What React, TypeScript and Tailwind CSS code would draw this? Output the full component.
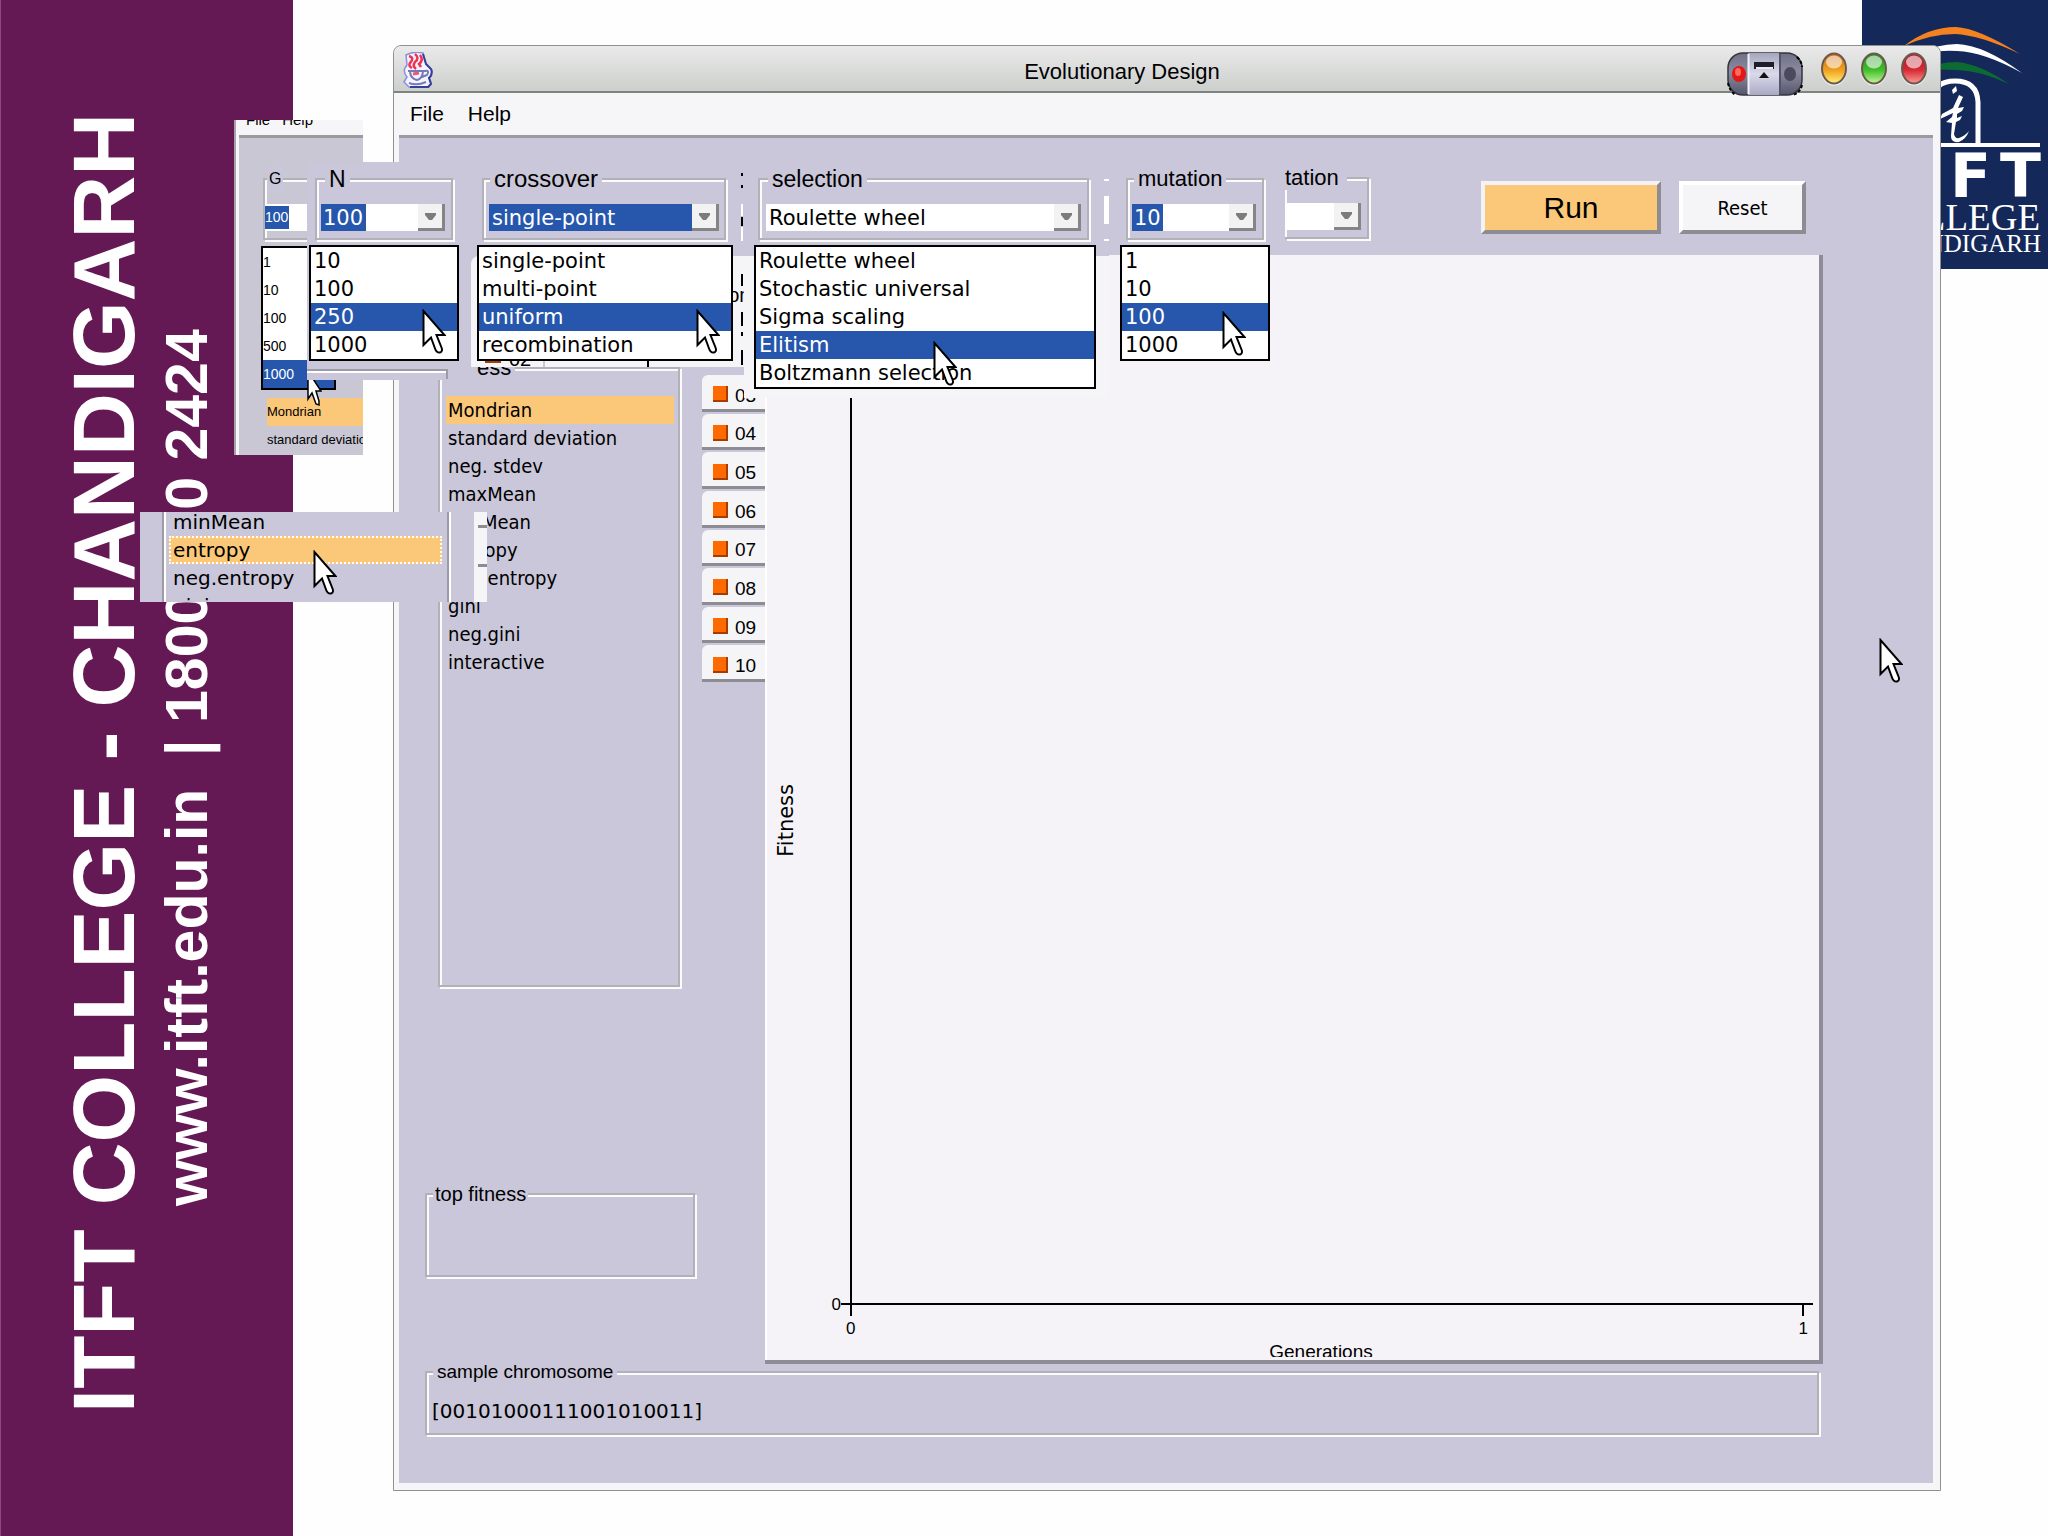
import type { ReactNode } from 'react'

const wide = "font-['DejaVu_Sans',sans-serif]"
const condensed = "font-['DejaVu_Sans_Condensed','DejaVu_Sans',sans-serif]"
const etched = 'border-2 border-[#b2b1b8] shadow-[2px_2px_0_#fbfafd,inset_2px_2px_0_#fbfafd]'

const fitnessFunctions = [
  'Mondrian',
  'standard deviation',
  'neg. stdev',
  'maxMean',
  'minMean',
  'entropy',
  'neg.entropy',
  'gini',
  'neg.gini',
  'interactive',
]
const samples = ['03', '04', '05', '06', '07', '08', '09', '10']

const Cursor = ({ className }: { className: string }) => (
  <svg className={`pointer-events-none absolute h-[46px] w-[24px] ${className}`} viewBox="0 0 24 46" aria-hidden="true">
    <path
      d="M1.5 2V36L9 28.5L13 39.5Q14.500 44 18 43.500Q21 42.500 19.500 38.500L14.500 26H22.500Z"
      fill="#fff"
      stroke="#000"
      strokeWidth="2"
    />
  </svg>
)

type GroupProps = { label: string; className?: string; legendClass?: string; children?: ReactNode }

const Group = ({ label, className = '', legendClass = 'ml-2 px-1 text-[23px]', children }: GroupProps) => (
  <fieldset className={`min-w-0 ${etched} ${className}`}>
    <legend className={`bg-[#c9c7d9] leading-6 ${legendClass}`}>{label}</legend>
    {children}
  </fieldset>
)

type ComboProps = { label: string; value: string; selectClass: string; className?: string }

const Combo = ({ label, value, selectClass, className = '' }: ComboProps) => (
  <div className={`mt-[13px] mb-[7px] flex h-[27px] bg-white ${className}`}>
    <select
      aria-label={label}
      defaultValue={value}
      className={`h-full appearance-none rounded-none text-[21px] leading-[26px] ${wide} ${selectClass}`}
    >
      <option>{value}</option>
    </select>
    <span className="ml-auto flex w-[27px] shrink-0 items-center justify-center border-r-[3px] border-b-[3px] border-[#858585] bg-[#f3f2f3]">
      <svg className="h-[7px] w-[11px]" viewBox="0 0 11 7" aria-hidden="true">
        <path d="M0 0H11V2L7 7H4L0 2Z" fill="#7c7c7c" />
      </svg>
    </span>
  </div>
)

type PopupProps = { items: string[]; active: string; className: string }

const Popup = ({ items, active, className }: PopupProps) => (
  <ul role="listbox" className={`absolute border-2 border-black bg-white text-[21px] leading-7 whitespace-nowrap ${wide} ${className}`}>
    {items.map((item) => (
      <li
        key={item}
        role="option"
        aria-selected={item === active}
        className={item === active ? 'bg-[#2657ac] pl-[3px] text-white' : 'pl-[3px]'}
      >
        {item}
      </li>
    ))}
  </ul>
)

const CollegeLogo = () => (
  <svg className="absolute top-0 right-0 h-[269px] w-[186px] bg-[#15285a]" viewBox="0 0 186 269" aria-label="ITFT College Chandigarh">
    <path d="M42 46Q66 27 94 27Q116 28 158 54Q118 35 93 34Q68 34 42 46Z" fill="#f58220" />
    <path d="M56 54Q75 44 95 44Q122 45 160 73Q122 52 95 51Q75 50 56 54Z" fill="#fff" />
    <path d="M60 70Q77 62 95 62Q118 64 147 84Q120 71 95 70Q77 69 60 70Z" fill="#0b6b33" />
    <path d="M70 145V102Q71 81 93 81Q115 81 116 102V145" fill="none" stroke="#fff" strokeWidth="5" />
    <path d="M8 145H178" stroke="#fff" strokeWidth="4" />
    <path d="M90 90L94 86L95 91L91 94Z" fill="#fff" />
    {/* script letter under the arch */}
    <path d="M97 95L101 97L96 108L102 107L100 111L95 114L95 118L100 116L98 120L94 122L92 134Q93 139 97 138Q103 136 107 131Q104 139 97 142Q89 143 89 136L90 123L84 122L90 117L91 113L78 119L80 114L91 108Z" fill="#fff" />
    <g fill="#fff">
      <g className="font-['DejaVu_Sans',sans-serif] text-[60px] font-bold">
        <text x="76" y="197" textAnchor="end">IT</text>
        <text x="88" y="197">F</text>
        <text x="179" y="197" textAnchor="end">T</text>
      </g>
      <text x="178" y="230" textAnchor="end" className="font-['Liberation_Serif',serif] text-[37px]">COLLEGE</text>
      <text x="179" y="252" textAnchor="end" className="font-['Liberation_Serif',serif] text-[25px]">CHANDIGARH</text>
    </g>
  </svg>
)

const JavaIcon = () => (
  <svg className="h-[36px] w-[30px] shrink-0" viewBox="0 0 30 36" aria-hidden="true">
    <path d="M3 3Q10-1 20 1L23 12L29 18Q30 24 26 26Q30 31 26 35H6L1 30L4 25Q0 20 2 16L4 13Z" fill="#f4f4ff" stroke="#8a8fe0" strokeWidth="1.500" />
    <path d="M20 2L23 12L28 17Q30 22 26 26L28 32L25 35H7" fill="none" stroke="#343f9c" strokeWidth="2" />
    <path d="M6 4Q12 6 7 11Q5 14 9 16M12 2Q17 6 12 10Q9 14 13 17M17 3Q21 8 16 12L18 15" fill="none" stroke="#ee3355" strokeWidth="2.500" />
    <path d="M5 19H22Q27 18 24 23L19 25M7 20Q8 27 14 28Q19 27 20 20M6 31Q14 34 23 30" fill="none" stroke="#7479b8" strokeWidth="2" />
    <path d="M10 22L16 21" stroke="#ee5577" strokeWidth="3" />
  </svg>
)

const PillIcon = () => (
  <svg className="h-[44px] w-[76px]" viewBox="0 0 76 44" aria-hidden="true">
    <defs>
      <linearGradient id="pill" x1="0" y1="0" x2="0" y2="1">
        <stop offset="0" stopColor="#6f6f86" />
        <stop offset=".45" stopColor="#8b8ba0" />
        <stop offset="1" stopColor="#55556c" />
      </linearGradient>
      <linearGradient id="pillMid" x1="0" y1="0" x2="0" y2="1">
        <stop offset="0" stopColor="#a5a5bd" />
        <stop offset=".5" stopColor="#dadaea" />
        <stop offset="1" stopColor="#a9a9c4" />
      </linearGradient>
    </defs>
    <rect x="1" y="1" width="74" height="42" rx="15" fill="url(#pill)" stroke="#34343f" strokeWidth="1.500" />
    <path d="M70 5Q75 10 75 15M75 33Q73 41 66 43M1 31Q3 40 9 43" fill="none" stroke="#000" strokeWidth="2" strokeDasharray="3 2" />
    <rect x="21" y="1" width="31" height="42" fill="url(#pillMid)" />
    <path d="M21.500 2V42" stroke="#f2f2fa" strokeWidth="2" />
    <path d="M53 2V42" stroke="#55556a" strokeWidth="2" />
    <rect x="27" y="10" width="20" height="7" fill="#1d1d2c" />
    <path d="M29 16H46" stroke="#e9e9f6" strokeWidth="2" />
    <path d="M37 20L42 26H32Z" fill="#111" />
    <ellipse cx="12" cy="22" rx="7" ry="8" fill="#e01818" />
    <ellipse cx="11" cy="20" rx="3" ry="4" fill="#ff6a5e" />
    <ellipse cx="63" cy="22" rx="6" ry="7" fill="#4a4a5c" />
  </svg>
)

type OrbProps = { id: string; dark: string; mid: string; light: string }

const Orb = ({ id, dark, mid, light }: OrbProps) => (
  <svg className="h-[34px] w-[28px]" viewBox="0 0 28 34" aria-hidden="true">
    <defs>
      <linearGradient id={id} x1="0" y1="0" x2="0" y2="1">
        <stop offset="0" stopColor={dark} />
        <stop offset=".55" stopColor={mid} />
        <stop offset="1" stopColor={light} />
      </linearGradient>
    </defs>
    <ellipse cx="14" cy="18" rx="13" ry="15.500" fill="#fff" opacity=".8" />
    <ellipse cx="14" cy="16.500" rx="12" ry="15" fill={`url(#${id})`} stroke="#6a5a4c" strokeWidth="2" />
    <ellipse cx="14" cy="10" rx="8" ry="6.500" fill="#fff" opacity=".6" />
  </svg>
)

const TitleBar = () => (
  <header className="flex h-[47px] items-start rounded-t-lg border-b-2 border-[#7f837f] bg-linear-to-b from-[#e9eae9] to-[#cdcfcd] pt-[6px] pr-[12px] pl-[9px]">
    <JavaIcon />
    <h1 className="flex-1 pl-[84px] text-center text-[22px] leading-10">Evolutionary Design</h1>
    <div className="flex items-start">
      <button type="button" aria-label="Stay on top" className="mr-[17px]"><PillIcon /></button>
      <div className="flex gap-3">
        <button type="button" aria-label="Minimize"><Orb id="orbMin" dark="#c9661a" mid="#f0a01c" light="#fff27a" /></button>
        <button type="button" aria-label="Maximize"><Orb id="orbMax" dark="#1f8a1f" mid="#3fbf2b" light="#c4f79a" /></button>
        <button type="button" aria-label="Close"><Orb id="orbClose" dark="#a81828" mid="#d62a35" light="#ff9c94" /></button>
      </div>
    </div>
  </header>
)

const Chart = () => (
  <section className="flex min-w-0 flex-1 flex-col border-r-4 border-b-4 border-[#8e8d97] bg-[#f5f3f7] shadow-[inset_2px_0_0_#fff]">
    <div className="flex flex-1">
      <div className="flex w-[42px] items-center justify-center pt-[70px]">
        <span className={`rotate-180 text-[21px] leading-6 [writing-mode:vertical-rl] ${wide}`}>Fitness</span>
      </div>
      <span className="mb-px w-[34px] self-end text-right text-[17px] leading-5">0</span>
      <div className="relative mr-[6px] flex-1">
        <svg className="absolute inset-0 size-full overflow-visible" aria-hidden="true">
          <line x1="10" x2="10" y1="0" y2="100%" stroke="#000" strokeWidth="2" />
          <svg y="100%" className="overflow-visible">
            <line x1="0" x2="100%" y1="-12" y2="-12" stroke="#000" strokeWidth="2" />
          </svg>
          <svg x="100%" y="100%" className="overflow-visible">
            <line x1="-10" x2="-10" y1="-12" y2="0" stroke="#000" strokeWidth="2" />
          </svg>
        </svg>
      </div>
    </div>
    <div className="mt-[3px] flex justify-between pr-[11px] pl-[81px] text-[17px] leading-5">
      <span>0</span>
      <span>1</span>
    </div>
    <div className="mb-[3px] h-[18px] overflow-hidden pt-[3px] pl-[58px] text-center text-[19px] leading-5">Generations</div>
  </section>
)

const MainWindow = () => (
  <main className="relative flex flex-1 flex-col rounded-t-lg border border-[#8f918f] bg-[#f6f6f8]">
    <TitleBar />
    <nav className="flex h-[42px] items-center gap-6 pl-4 text-[21px] leading-[38px]">
      <button type="button">File</button>
      <button type="button">Help</button>
    </nav>
    <div className="mr-[7px] mb-[7px] ml-[5px] flex flex-1 flex-col border-t-[3px] border-[#9b9b9f] bg-[#c9c7d9] pr-[110px] pb-[48px] pl-[26px]">
      <div className="flex h-[117px] items-start justify-end pr-[17px]">
        <Group label="tation" className="mt-[28px] mr-[112px] w-[84px] border-l-0" legendClass="pr-2 text-[22px]">
          <Combo label="mutation rate" value=" " selectClass="w-[40px]" className="mr-[6px]" />
        </Group>
        <button
          type="button"
          className="mt-[43px] mr-[18px] h-[53px] w-[180px] border-4 border-t-[#f4f2f4] border-r-[#8d8c92] border-b-[#8d8c92] border-l-[#f4f2f4] bg-[#fbc778] text-[30px]"
        >
          Run
        </button>
        <button
          type="button"
          className={`mt-[43px] h-[53px] w-[127px] border-4 border-t-white border-r-[#8d8c92] border-b-[#8d8c92] border-l-white bg-[#f5f4f7] text-xl ${condensed}`}
        >
          Reset
        </button>
      </div>
      <div className="flex min-h-[1109px]">
        <div className="flex w-[277px] shrink-0 flex-col">
          <Group label="ess" className="mt-[101px] ml-[13px] min-h-[631px] w-[242px]" legendClass="ml-1 pr-1 pl-[33px] text-[22px]">
            <ul className={`mt-4 mr-1 ml-[6px] text-xl leading-7 ${condensed}`}>
              {fitnessFunctions.map((name) => (
                <li key={name} className={name === 'Mondrian' ? 'bg-[#fbc778] pl-[2px]' : 'pl-[2px]'}>
                  {name}
                </li>
              ))}
            </ul>
          </Group>
          <Group label="top fitness" className="mt-auto mb-[87px] h-[95px] w-[270px]" legendClass="ml-[6px] px-[2px] text-xl" />
        </div>
        <div className="flex h-[427px] w-[63px] shrink-0 flex-col pt-[118px]">
          {samples.map((n) => (
            <button
              key={n}
              type="button"
              className="mt-[2px] flex flex-1 items-center gap-[7px] rounded-tl-md border-b-[3px] border-[#8d8c92] bg-[#f5f4f7] pt-2 pl-[11px] text-[19px] leading-5"
            >
              <span className="mb-[3px] h-4 w-[15px] border-r-2 border-b-2 border-[#a63c00] bg-[#ff6a00]" />
              {n}
            </button>
          ))}
        </div>
        <Chart />
      </div>
      <Group label="sample chromosome" className="-mt-1 mr-1" legendClass="ml-[6px] px-1 text-[19px]">
        <p className={`mt-[13px] mb-2 pl-[5px] text-xl leading-7 ${wide}`}>[00101000111001010011]</p>
      </Group>
    </div>
    <Cursor className="top-[592px] right-[37px]" />
  </main>
)

const GenerationsClip = () => (
  <section className="absolute top-[120px] left-[234px] h-[335px] w-[129px] overflow-hidden bg-[#f6f6f8] pl-[5px] shadow-[inset_2px_0_0_#a5a5a9]">
    <div className="flex h-[15px] items-start gap-3 overflow-hidden pl-[7px] text-[15px] leading-5">
      <span className="-mt-[10px]">File</span>
      <span className="-mt-[10px]">Help</span>
    </div>
    <div className="h-full border-t-[3px] border-[#9b9b9f] bg-[#c9c7d4] pl-[24px]">
      <Group label="G" className="mt-[29px] w-[90px]" legendClass="ml-[2px] px-[2px] text-base">
        <div className="mt-[13px] mb-[7px] flex h-[27px] bg-white">
          <input aria-label="G" defaultValue="100" className="my-[2px] w-[24px] bg-[#2657ac] text-[14px] text-white" />
        </div>
      </Group>
      <ul className="mt-[158px] pl-[4px] text-[13px] leading-7 whitespace-nowrap">
        <li className="bg-[#fbc778]">Mondrian</li>
        <li>standard deviation</li>
      </ul>
    </div>
    <ul role="listbox" className="absolute top-[126px] left-[27px] w-[75px] border-2 border-black bg-white text-[14px] leading-7">
      {['1', '10', '100', '500', '1000'].map((item) => (
        <li key={item} role="option" aria-selected={item === '1000'} className={item === '1000' ? 'bg-[#2657ac] text-white' : ''}>
          {item}
        </li>
      ))}
    </ul>
    <svg className="absolute top-[250px] left-[73px] h-[38px] w-[15px]" viewBox="0 0 15 38" aria-hidden="true">
      <path d="M1 1V29L5 23L9 34L12 35V31L9 21H14Z" fill="#fff" stroke="#000" strokeWidth="1.500" />
    </svg>
  </section>
)

const PopulationClip = () => (
  <section className="absolute top-[162px] left-[307px] h-[218px] w-[163px] bg-[#c9c7d9] pt-[5px] pl-[8px]">
    <Group label="N" className="w-[138px]">
      <Combo label="N" value="100" selectClass="w-[45px] bg-[#2657ac] pl-[2px] text-white" className="mr-[6px] ml-[4px]" />
    </Group>
    <div className="mt-[129px] -ml-[8px] h-[10px] w-[141px] border-t-2 border-r-2 border-[#9d9ca6] shadow-[inset_0_2px_0_#fff]" />
    <Popup items={['10', '100', '250', '1000']} active="250" className="top-[83px] left-[2px] w-[150px]" />
    <Cursor className="top-[147px] left-[115px]" />
  </section>
)

const CrossoverClip = () => (
  <section className="absolute top-[162px] left-[471px] h-[205px] w-[273px]">
    <div className="h-[94px] bg-[#c9c7d9] pt-[5px] pl-[11px]">
      <Group label="crossover" className="w-[244px]" legendClass="ml-[6px] px-1 text-2xl">
        <Combo label="crossover" value="single-point" selectClass="flex-1 bg-[#2657ac] pl-[3px] text-white" className="mr-[5px] ml-[5px]" />
      </Group>
    </div>
    <div className="flex h-[111px] items-end rounded-tl-lg bg-[#f5f4f7] text-[20px]">
      <div className="flex h-3 w-[74px] items-end gap-2 overflow-hidden border-r-2 border-[#c9c9cf] pl-[14px] leading-4">
        <span className="mb-[4px] h-4 w-[16px] border-b-2 border-[#a63c00] bg-[#ff6a00]" />
        <span>02</span>
      </div>
      <div className="h-3 w-[104px] border-r-2 border-black" />
      <span className="absolute top-[121px] right-[-12px] leading-6">om</span>
    </div>
    <Popup
      items={['single-point', 'multi-point', 'uniform', 'recombination']}
      active="uniform"
      className="top-[83px] left-[6px] w-[256px]"
    />
    <Cursor className="top-[147px] left-[225px]" />
  </section>
)

const SelectionClip = () => (
  <section className="absolute top-[162px] left-[744px] h-[236px] w-[365px]">
    <div className="flex h-[94px] items-start bg-[#c9c7d9] pt-[5px] pl-[14px]">
      <Group label="selection" className="w-[331px]">
        <Combo label="selection" value="Roulette wheel" selectClass="flex-1 pl-[3px]" className="mr-[6px] ml-[6px]" />
      </Group>
      <div className="mt-[12px] ml-[15px] flex h-[62px] w-[5px] items-center border-y-2 border-white">
        <span className="h-7 w-full bg-white" />
      </div>
    </div>
    <div className="h-[142px] bg-[#f5f4f7]" />
    {/* broken rule left between the two pasted groups */}
    <svg className="absolute top-0 left-[-4px] h-[236px] w-[4px]" aria-hidden="true">
      <path d="M2 11V14M2 23V26M2 55V64M2 112V124M2 150V164M2 170V174M2 188V203" stroke="#000" strokeWidth="2" />
      <path d="M2 42V54M2 65V79" stroke="#fff" strokeWidth="2" />
    </svg>
    <Popup
      items={['Roulette wheel', 'Stochastic universal', 'Sigma scaling', 'Elitism', 'Boltzmann selection']}
      active="Elitism"
      className="top-[83px] left-[10px] w-[342px]"
    />
    <Cursor className="top-[179px] left-[189px]" />
  </section>
)

const MutationClip = () => (
  <section className="absolute top-[162px] left-[1109px] h-[200px] w-[166px] pt-[5px] pl-[17px]">
    <Group label="mutation" className="w-[138px]" legendClass="ml-[6px] px-1 text-[22px]">
      <Combo label="mutation" value="10" selectClass="w-[31px] bg-[#2657ac] pl-[2px] text-white" className="mr-[6px] ml-[4px]" />
    </Group>
    <Popup items={['1', '10', '100', '1000']} active="100" className="top-[83px] left-[11px] w-[150px]" />
    <Cursor className="top-[149px] left-[113px]" />
  </section>
)

const EntropyClip = () => (
  <section className="absolute top-[512px] left-[140px] flex h-[90px] w-[347px] overflow-hidden bg-[#c9c7d9]">
    <div className="w-[24px] border-r-2 border-[#9d9ca6]" />
    <ul className={`-mt-1 w-[285px] border-r-2 border-[#9d9ca6] pr-[5px] pl-[5px] text-xl leading-7 shadow-[inset_2px_0_0_#fff,2px_0_0_#fff] ${wide}`}>
      <li className="border border-transparent pl-[3px] leading-[26px]">minMean</li>
      <li className="border-2 border-dotted border-white bg-[#fbc778] pl-[2px] leading-6">entropy</li>
      <li className="pl-1">neg.entropy</li>
      <li className="pl-1">gini</li>
    </ul>
    <div className="ml-auto flex w-[13px] flex-col bg-[#f5f4f7]">
      <span className="mt-[13px] ml-[4px] h-[3px] bg-[#8d8c92]" />
      <span className="mt-[36px] ml-[4px] h-[3px] bg-[#8d8c92]" />
    </div>
    <Cursor className="top-[38px] left-[173px]" />
  </section>
)

export default function App() {
  return (
    <div className="relative flex min-h-screen bg-[#fdfefd] font-['Liberation_Sans',sans-serif] text-black">
      <CollegeLogo />
      <aside className="flex w-[293px] shrink-0 border-l border-[#8d4a80] bg-[#641854] font-bold whitespace-pre text-white">
        <p className="mt-[113px] ml-[53px] w-[100px] rotate-180 text-right text-[87px] leading-[100px] [writing-mode:vertical-rl]">
          ITFT COLLEGE - CHANDIGARH
        </p>
        <p className="mt-[329px] ml-px w-[64px] rotate-180 text-right text-[59px] leading-[64px] [writing-mode:vertical-rl]">
          {'www.itft.edu.in  | 1800 200 2424'}
        </p>
      </aside>
      <div className="flex flex-1 pt-[45px] pr-[107px] pb-[45px] pl-[100px]">
        <MainWindow />
      </div>
      <GenerationsClip />
      <PopulationClip />
      <CrossoverClip />
      <SelectionClip />
      <MutationClip />
      <EntropyClip />
    </div>
  )
}
